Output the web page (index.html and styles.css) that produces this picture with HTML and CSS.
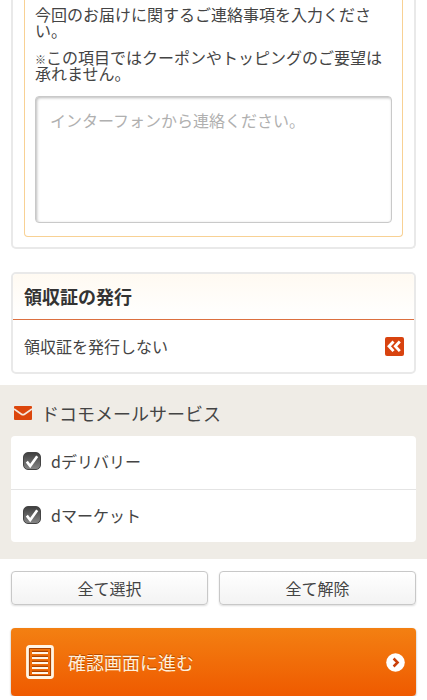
FILE: index.html
```html
<!DOCTYPE html>
<html lang="ja">
<head>
  <meta charset="UTF-8">
  <meta name="viewport" content="width=device-width, initial-scale=1.0">
  <title>ご注文内容の入力</title>
  <link rel="stylesheet" href="styles.css">
</head>
<body>
  <form>
    <section class="card contact">
      <div class="contact-box">
        <p><label for="message">今回のお届けに関するご連絡事項を入力ください。</label></p>
        <p><span class="mark">※</span>この項目ではクーポンやトッピングのご要望は承れません。</p>
        <textarea id="message" placeholder="インターフォンから連絡ください。"></textarea>
      </div>
    </section>

    <section class="card receipt">
      <h2>領収証の発行</h2>
      <button type="button" class="receipt-row">
        <span>領収証を発行しない</span>
        <svg width="19" height="19" viewBox="0 0 19 19" aria-hidden="true">
          <rect width="19" height="19" rx="2" fill="#d8430f"/>
          <path d="M8.5 4.5L4 9.3l4.5 4.8M14.8 4.5L10.3 9.3l4.5 4.8" fill="none" stroke="#fff" stroke-width="2.8"/>
        </svg>
      </button>
    </section>

    <section class="mail">
      <h2>
        <svg width="18" height="14" viewBox="0 0 18 14" aria-hidden="true">
          <rect width="18" height="14" rx="1" fill="#dc460c"/>
          <path d="M0 3l7.5 5.2q1.5 1 3 0L18 3" fill="none" stroke="#f5e6dc" stroke-width="1.7"/>
        </svg>
        ドコモメールサービス
      </h2>
      <ul>
        <li><label><input type="checkbox" checked><svg class="tick" viewBox="0 0 18 18" aria-hidden="true"><path d="M3.8 9.6l3.4 4.4L14.2 4.2"/></svg>dデリバリー</label></li>
        <li><label><input type="checkbox" checked><svg class="tick" viewBox="0 0 18 18" aria-hidden="true"><path d="M3.8 9.6l3.4 4.4L14.2 4.2"/></svg>dマーケット</label></li>
      </ul>
    </section>

    <div class="select-buttons">
      <button type="button" onclick="checkAll(true)">全て選択</button>
      <button type="button" onclick="checkAll(false)">全て解除</button>
    </div>

    <button type="button" class="submit">
      <svg width="28" height="34" viewBox="0 0 28 34" aria-hidden="true">
        <rect x="3" y="3" width="22" height="28" fill="none" stroke="#a84300" stroke-width="2"/>
        <rect x="1.5" y="1.5" width="25" height="31" rx="2" fill="none" stroke="#fff5e6" stroke-width="2.8"/>
        <path d="M6 6.5h16M6 11.5h16M6 16.5h16M6 21.5h16M6 26.5h16" stroke="#a84300" stroke-width="1.5"/>
        <path d="M6 8h16M6 13h16M6 18h16M6 23h16M6 28h16" stroke="#fff5e6" stroke-width="2"/>
      </svg>
      <span>確認画面に進む</span>
      <svg width="19" height="19" viewBox="0 0 19 19" aria-hidden="true">
        <circle cx="9.5" cy="9.5" r="9.3" fill="#fff"/>
        <path d="M7.6 5.5l4 4-4 4" fill="none" stroke="#c93f0a" stroke-width="2.5"/>
      </svg>
    </button>
  </form>

  <script>
    function checkAll(state) {
      document.querySelectorAll(".mail input").forEach(function (box) {
        box.checked = state;
      });
    }
  </script>
</body>
</html>
```

FILE: styles.css
```css
* {
  box-sizing: border-box;
}
body {
  margin: 0;
  background: #fff;
  color: #444;
  font-family: "Noto Sans CJK JP", sans-serif;
  font-size: 16px;
  line-height: 16px;
}
button, textarea {
  font: inherit;
  color: inherit;
}
h2, p, ul {
  margin: 0;
  padding: 0;
}
svg {
  display: block;
  flex: none;
}
.card {
  margin: 0 11px;
  border: 2px solid #e9e9e9;
  border-radius: 5px;
}
.contact {
  border-top: 0;
  border-radius: 0 0 5px 5px;
  padding: 0 11px 10px;
}
.contact-box {
  border: 1px solid #f8d194;
  border-top: 0;
  border-radius: 0 0 4px 4px;
  padding: 6px 10px 13px;
}
.contact-box p {
  margin-bottom: 11px;
}
.mark {
  font-size: 11px;
  line-height: 8px;
}
.contact-box textarea {
  display: block;
  width: 100%;
  height: 127px;
  margin-top: 15px;
  padding: 15px 14px;
  border: 1px solid #c9c9c9;
  border-radius: 4px;
  box-shadow: inset 1px 1px 3px #bbb;
  background: #fff;
  resize: none;
}
.contact-box textarea::placeholder {
  color: #b0b0b0;
  opacity: 1;
}
.receipt {
  margin-top: 23px;
}
.receipt h2 {
  padding: 0 11px;
  border-bottom: 1px solid #dc7040;
  border-radius: 4px 4px 0 0;
  background: linear-gradient(#fffaf2, #fff);
  color: #333;
  font-size: 18px;
  font-weight: bold;
  line-height: 45px;
}
.receipt-row {
  display: flex;
  align-items: center;
  justify-content: space-between;
  width: 100%;
  height: 52px;
  padding: 0 10px 0 11px;
  border: 0;
  background: none;
}
.mail {
  margin-top: 11px;
  padding: 10px 11px 17px;
  background: #efece6;
}
.mail h2 {
  display: flex;
  align-items: center;
  gap: 9px;
  padding-left: 3px;
  font-size: 18px;
  font-weight: normal;
  line-height: 36px;
}
.mail ul {
  margin-top: 5px;
  border-radius: 4px;
  background: #fff;
  list-style: none;
}
.mail li {
  height: 53px;
}
.mail li + li {
  border-top: 1px solid #e4e4e4;
}
.mail label {
  display: grid;
  grid-template-columns: 18px 1fr;
  align-items: center;
  column-gap: 10px;
  height: 52px;
  padding: 0 12px 2px;
}
.mail input, .tick {
  grid-area: 1 / 1;
  width: 18px;
  height: 18px;
}
.mail input {
  appearance: none;
  margin: 0;
  border: 1px solid #444;
  border-radius: 5px;
  background: linear-gradient(#404040, #858585);
}
.tick {
  visibility: hidden;
  pointer-events: none;
  fill: none;
  stroke: #fff;
  stroke-width: 2.6;
}
.mail input:checked + .tick {
  visibility: visible;
}
.select-buttons {
  display: flex;
  gap: 11px;
  margin: 12px 11px 0;
}
.select-buttons button {
  flex: 1;
  height: 34px;
  padding: 0;
  border: 1px solid #c8c8c8;
  border-radius: 4px;
  background: linear-gradient(#fff, #f3f3f3);
  box-shadow: 0 1px 2px #ddd;
}
.submit {
  display: flex;
  align-items: center;
  width: calc(100% - 22px);
  height: 68px;
  margin: 23px 11px 0;
  padding: 0 11px 0 15px;
  border: 0;
  border-radius: 4px;
  background: linear-gradient(#f38012, #ef5a00);
  box-shadow: 0 1px 2px #999;
}
.submit span {
  flex: 1;
  margin-left: 14px;
  color: #fff0dc;
  font-size: 18px;
  text-align: left;
  text-shadow: 0 -1px 0 #b84c00;
}
```
